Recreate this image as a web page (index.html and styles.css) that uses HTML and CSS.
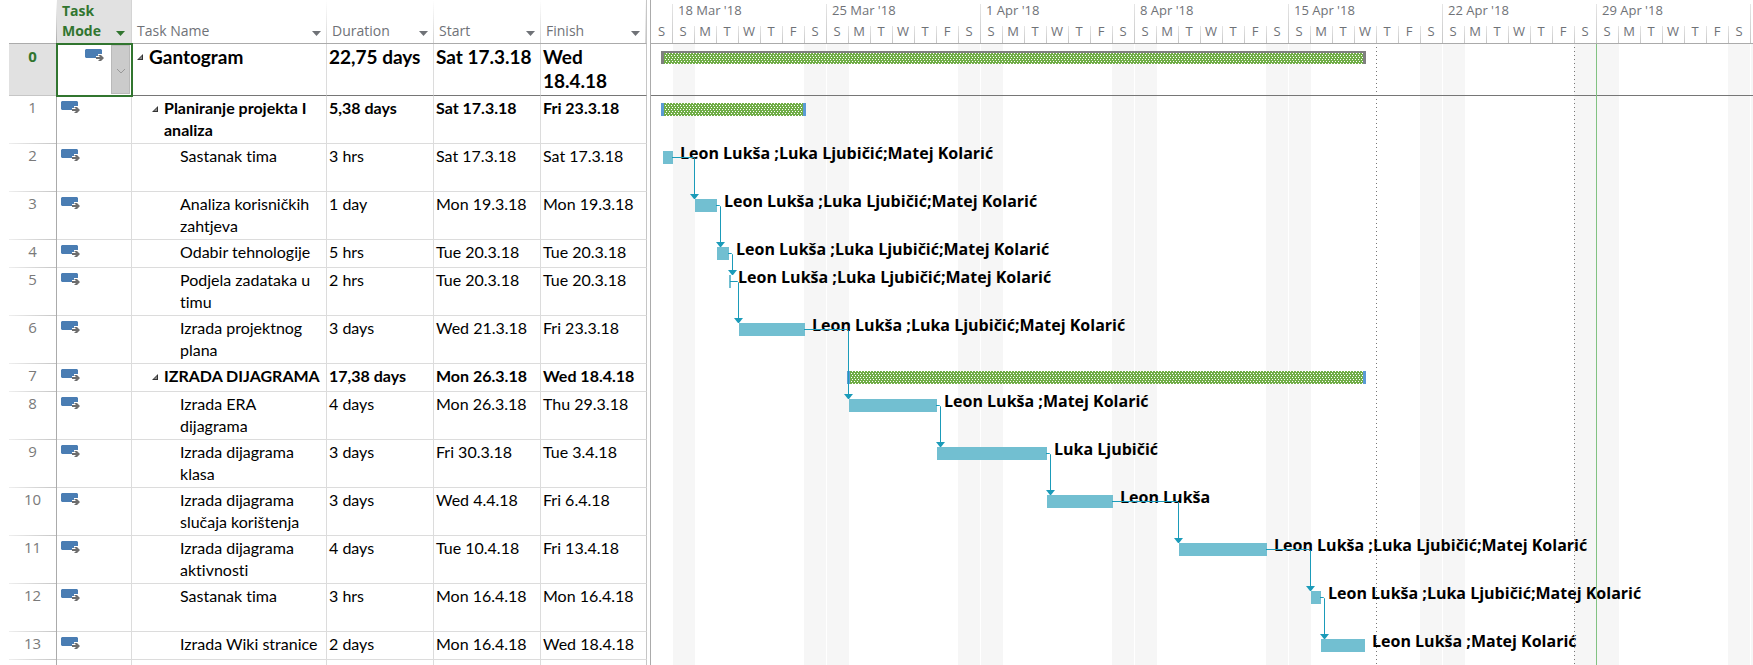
FILE: index.html
```html
<!DOCTYPE html>
<html lang="hr">
<head>
<meta charset="utf-8">
<meta name="viewport" content="width=device-width, initial-scale=1">
<title>Gantogram</title>
<link rel="stylesheet" href="styles.css">
</head>
<body>
<svg class="defs" aria-hidden="true">
  <symbol id="mode" viewBox="0 0 19 13">
    <path fill="#4a7db3" d="M1 0h15l1 1v4h-4v2h-2v2H1L0 8V1z"/>
    <path fill="#6d6d6d" d="M11 8h4l-2-2h3l3 3-3 3h-3l2-2h-4z"/>
  </symbol>
  <symbol id="fold" viewBox="0 0 6 6">
    <path fill="#333" d="M6 0v6H0z"/><path fill="#8a8a8a" d="M5 2v3H2z"/>
  </symbol>
</svg>
<main class="project">
  <table class="sheet">
    <colgroup><col class="c-id"><col class="c-mode"><col class="c-name"><col class="c-date"><col class="c-date"><col class="c-finish"></colgroup>
    <thead>
      <tr>
        <th class="id"></th>
        <th class="mode-head"><div class="head"><span>Task<br>Mode</span><button class="menu" aria-label="Task Mode menu"></button></div></th>
        <th><div class="head"><span>Task Name</span><button class="menu" aria-label="Task Name menu"></button></div></th>
        <th><div class="head"><span>Duration</span><button class="menu" aria-label="Duration menu"></button></div></th>
        <th><div class="head"><span>Start</span><button class="menu" aria-label="Start menu"></button></div></th>
        <th><div class="head"><span>Finish</span><button class="menu" aria-label="Finish menu"></button></div></th>
      </tr>
    </thead>
    <tbody>
      <tr class="root"><td class="id">0</td><td class="mode selected"><div class="picker"><svg class="icon"><use href="#mode"/></svg><button class="drop" aria-label="Choose task mode"><svg viewBox="0 0 10 6"><path d="M1 1l4 4 4-4"/></svg></button></div></td><td class="name"><div><svg class="fold"><use href="#fold"/></svg>Gantogram</div></td><td>22,75 days</td><td>Sat 17.3.18</td><td>Wed<br>18.4.18</td></tr>
      <tr class="tall phase"><td class="id">1</td><td class="mode"><svg class="icon"><use href="#mode"/></svg></td><td class="name"><div><svg class="fold"><use href="#fold"/></svg>Planiranje projekta I<br>analiza</div></td><td>5,38 days</td><td>Sat 17.3.18</td><td>Fri 23.3.18</td></tr>
      <tr class="tall"><td class="id">2</td><td class="mode"><svg class="icon"><use href="#mode"/></svg></td><td class="name">Sastanak tima</td><td>3 hrs</td><td>Sat 17.3.18</td><td>Sat 17.3.18</td></tr>
      <tr class="tall"><td class="id">3</td><td class="mode"><svg class="icon"><use href="#mode"/></svg></td><td class="name">Analiza korisničkih<br>zahtjeva</td><td>1 day</td><td>Mon 19.3.18</td><td>Mon 19.3.18</td></tr>
      <tr><td class="id">4</td><td class="mode"><svg class="icon"><use href="#mode"/></svg></td><td class="name">Odabir tehnologije</td><td>5 hrs</td><td>Tue 20.3.18</td><td>Tue 20.3.18</td></tr>
      <tr class="tall"><td class="id">5</td><td class="mode"><svg class="icon"><use href="#mode"/></svg></td><td class="name">Podjela zadataka u<br>timu</td><td>2 hrs</td><td>Tue 20.3.18</td><td>Tue 20.3.18</td></tr>
      <tr class="tall"><td class="id">6</td><td class="mode"><svg class="icon"><use href="#mode"/></svg></td><td class="name">Izrada projektnog<br>plana</td><td>3 days</td><td>Wed 21.3.18</td><td>Fri 23.3.18</td></tr>
      <tr class="phase"><td class="id">7</td><td class="mode"><svg class="icon"><use href="#mode"/></svg></td><td class="name"><div><svg class="fold"><use href="#fold"/></svg>IZRADA DIJAGRAMA</div></td><td>17,38 days</td><td>Mon 26.3.18</td><td>Wed 18.4.18</td></tr>
      <tr class="tall"><td class="id">8</td><td class="mode"><svg class="icon"><use href="#mode"/></svg></td><td class="name">Izrada ERA<br>dijagrama</td><td>4 days</td><td>Mon 26.3.18</td><td>Thu 29.3.18</td></tr>
      <tr class="tall"><td class="id">9</td><td class="mode"><svg class="icon"><use href="#mode"/></svg></td><td class="name">Izrada dijagrama<br>klasa</td><td>3 days</td><td>Fri 30.3.18</td><td>Tue 3.4.18</td></tr>
      <tr class="tall"><td class="id">10</td><td class="mode"><svg class="icon"><use href="#mode"/></svg></td><td class="name">Izrada dijagrama<br>slučaja korištenja</td><td>3 days</td><td>Wed 4.4.18</td><td>Fri 6.4.18</td></tr>
      <tr class="tall"><td class="id">11</td><td class="mode"><svg class="icon"><use href="#mode"/></svg></td><td class="name">Izrada dijagrama<br>aktivnosti</td><td>4 days</td><td>Tue 10.4.18</td><td>Fri 13.4.18</td></tr>
      <tr class="tall"><td class="id">12</td><td class="mode"><svg class="icon"><use href="#mode"/></svg></td><td class="name">Sastanak tima</td><td>3 hrs</td><td>Mon 16.4.18</td><td>Mon 16.4.18</td></tr>
      <tr><td class="id">13</td><td class="mode"><svg class="icon"><use href="#mode"/></svg></td><td class="name">Izrada Wiki stranice</td><td>2 days</td><td>Mon 16.4.18</td><td>Wed 18.4.18</td></tr>
      <tr class="blank"><td class="id"></td><td></td><td></td><td></td><td></td><td></td></tr>
    </tbody>
  </table>

  <section class="timeline" aria-label="Gantt chart">
    <header class="calendar">
      <div class="week lead"><div class="days"><span>S</span></div></div>
      <div class="week"><div class="date">18 Mar '18</div><div class="days"><span>S</span><span>M</span><span>T</span><span>W</span><span>T</span><span>F</span><span>S</span></div></div>
      <div class="week"><div class="date">25 Mar '18</div><div class="days"><span>S</span><span>M</span><span>T</span><span>W</span><span>T</span><span>F</span><span>S</span></div></div>
      <div class="week"><div class="date">1 Apr '18</div><div class="days"><span>S</span><span>M</span><span>T</span><span>W</span><span>T</span><span>F</span><span>S</span></div></div>
      <div class="week"><div class="date">8 Apr '18</div><div class="days"><span>S</span><span>M</span><span>T</span><span>W</span><span>T</span><span>F</span><span>S</span></div></div>
      <div class="week"><div class="date">15 Apr '18</div><div class="days"><span>S</span><span>M</span><span>T</span><span>W</span><span>T</span><span>F</span><span>S</span></div></div>
      <div class="week"><div class="date">22 Apr '18</div><div class="days"><span>S</span><span>M</span><span>T</span><span>W</span><span>T</span><span>F</span><span>S</span></div></div>
      <div class="week"><div class="date">29 Apr '18</div><div class="days"><span>S</span><span>M</span><span>T</span><span>W</span><span>T</span><span>F</span><span>S</span></div></div>
      <div class="week"></div>
    </header>
    <div class="chart">
      <div class="lane root"><div class="bar total" style="margin-left:10px;width:705px"></div></div>
      <div class="lane tall"><div class="bar summary" style="margin-left:10px;width:145px"></div></div>
      <div class="lane tall"><div class="bar" style="margin-left:12px;width:10px"></div><span class="who">Leon Lukša ;Luka Ljubičić;Matej Kolarić</span></div>
      <div class="lane tall"><div class="bar" style="margin-left:44px;width:22px"></div><span class="who">Leon Lukša ;Luka Ljubičić;Matej Kolarić</span></div>
      <div class="lane"><div class="bar" style="margin-left:66px;width:12px"></div><span class="who">Leon Lukša ;Luka Ljubičić;Matej Kolarić</span></div>
      <div class="lane tall"><div class="bar" style="margin-left:78px;width:2px"></div><span class="who">Leon Lukša ;Luka Ljubičić;Matej Kolarić</span></div>
      <div class="lane tall"><div class="bar" style="margin-left:88px;width:66px"></div><span class="who">Leon Lukša ;Luka Ljubičić;Matej Kolarić</span></div>
      <div class="lane"><div class="bar summary" style="margin-left:196px;width:519px"></div></div>
      <div class="lane tall"><div class="bar" style="margin-left:198px;width:88px"></div><span class="who">Leon Lukša ;Matej Kolarić</span></div>
      <div class="lane tall"><div class="bar" style="margin-left:286px;width:110px"></div><span class="who">Luka Ljubičić</span></div>
      <div class="lane tall"><div class="bar" style="margin-left:396px;width:66px"></div><span class="who">Leon Lukša</span></div>
      <div class="lane tall"><div class="bar" style="margin-left:528px;width:88px"></div><span class="who">Leon Lukša ;Luka Ljubičić;Matej Kolarić</span></div>
      <div class="lane tall"><div class="bar" style="margin-left:660px;width:10px"></div><span class="who">Leon Lukša ;Luka Ljubičić;Matej Kolarić</span></div>
      <div class="lane"><div class="bar" style="margin-left:670px;width:44px"></div><span class="who">Leon Lukša ;Matej Kolarić</span></div>
      <svg class="links" aria-hidden="true">
        <defs><marker id="tip" viewBox="0 0 9 5" markerWidth="9" markerHeight="5" refX="4.5" refY="0" markerUnits="userSpaceOnUse"><path d="M0 0h9L5 5H4z" fill="#1b9bb9"/></marker></defs>
        <g fill="none" stroke="#1b9bb9" marker-end="url(#tip)">
          <path d="M21 113.500H42.500L43.500 114.500V150"/>
          <path d="M65 161.500H68.500L69.500 162.500V198"/>
          <path d="M77 209.500H80.500L81.500 210.500V226"/>
          <path d="M79 237.500H86.500L87.500 238.500V274"/>
          <path d="M153 285.500H196.500L197.500 286.500V350"/>
          <path d="M285 361.500H288.500L289.500 362.500V398"/>
          <path d="M395 409.500H398.500L399.500 410.500V446"/>
          <path d="M461 457.500H526.500L527.500 458.500V494"/>
          <path d="M615 505.500H658.500L659.500 506.500V542"/>
          <path d="M669 553.500H672.500L673.500 554.500V590"/>
        </g>
      </svg>
      <div class="rule dotted" style="left:725px"></div>
      <div class="rule dotted" style="left:923px"></div>
      <div class="rule today" style="left:945px"></div>
    </div>
  </section>
</main>
</body>
</html>
```
FILE: styles.css
```css
* { box-sizing: border-box; }
body { margin: 0; background: #fff; color: #000; }
.defs { position: absolute; width: 0; height: 0; }
button { border: 0; padding: 0; background: none; }

.project {
  display: flex;
  height: 100vh;
  padding-left: 9px;
  overflow: hidden;
}

/* Task sheet */
.sheet {
  flex: none;
  width: 638px;
  table-layout: fixed;
  border-collapse: separate;
  border-spacing: 0;
  font: 16px/22px Lato, Carlito, sans-serif;
  font-variant-ligatures: none;
}
.c-id { width: 48px; }
.c-mode { width: 75px; }
.c-name { width: 195px; }
.c-date { width: 107px; }
.c-finish { width: 106px; }

.sheet th {
  height: 44px;
  padding: 0;
  vertical-align: bottom;
  text-align: left;
  font: 14px/20px "Open Sans", sans-serif;
  color: #6f7277;
  border-bottom: 1px solid #ababab;
  background: linear-gradient(#fff, #d4d4d4) right / 1px 100% no-repeat;
}
.sheet th.mode-head { background: #e1e1e1; color: #31752f; font-weight: 700; border-right: 1px solid #d4d4d4; }
.sheet th.id { background: linear-gradient(#fff, #ababab) right / 1px 100% no-repeat; }
.head {
  display: flex;
  justify-content: space-between;
  align-items: flex-end;
  padding: 0 6px 2px 5px;
}
.menu {
  width: 9px;
  height: 5px;
  margin-bottom: 5px;
  background: currentColor;
  color: inherit;
  clip-path: polygon(0 0, 100% 0, 50% 100%);
}

.sheet td {
  height: 28px;
  padding: 1px 0 0 2px;
  vertical-align: top;
  white-space: nowrap;
  border-right: 1px solid #dcdcdc;
  border-bottom: 1px solid #dcdcdc;
}
.sheet tr > :last-child { border-right: 1px solid #c6c6c6; }
.sheet .tall td { height: 48px; }
.sheet .root td { height: 52px; font-size: 19px; line-height: 24px; font-weight: 700; border-bottom-color: #767676; }
.sheet .phase td { font-weight: 700; }
.sheet .blank td { border-bottom: 0; }

.sheet td.id {
  padding: 1px 0 0;
  text-align: center;
  font: 15px/20px "Open Sans", sans-serif;
  color: #7a7a7a;
  border-right: 1px solid #ababab;
  border-bottom: 0;
  background: linear-gradient(90deg, #eee, #c6c6c6) bottom / 100% 1px no-repeat;
}
.sheet .phase td.id { font-weight: 400; }
.sheet .root td.id { background: #e1e1e1; color: #31752f; font-size: 15px; line-height: 22px; font-weight: 700; border-bottom: 1px solid #c6c6c6; }
.sheet .blank td.id { background: none; }

.sheet td.mode { padding: 5px 0 0 4px; line-height: 0; }
.icon { width: 19px; height: 13px; }
.sheet td.selected { padding: 0; outline: 2px solid #31752f; outline-offset: -1px; }
.picker { display: flex; justify-content: flex-end; gap: 7px; padding: 1px 1px 0 0; }
.picker .icon { margin-top: 4px; }
.drop { width: 19px; height: 49px; border: 1px solid #b9b9b9; background: #cbcbcb; }
.drop svg { width: 10px; height: 6px; fill: none; stroke: #989898; }

.sheet td.name { padding-left: 48px; }
.sheet .phase .name { padding-left: 20px; }
.sheet .root .name { padding-left: 5px; }
.name div { display: flex; gap: 6px; }
.fold { flex: none; width: 6px; height: 6px; margin-top: 9px; }

/* Timeline */
.timeline {
  flex: 1;
  min-width: 0;
  margin-left: 3px;
  border-left: 1px solid #ababab;
  display: flex;
  flex-direction: column;
  overflow: hidden;
}
.calendar {
  flex: none;
  display: flex;
  height: 44px;
  padding-top: 4px;
  border-bottom: 1px solid #ababab;
  font: 13px/12px "Open Sans", sans-serif;
  color: #6f7277;
}
.week {
  flex: none;
  width: 154px;
  display: flex;
  flex-direction: column;
  justify-content: space-between;
  background: linear-gradient(#e6e6e6, #c6c6c6) left / 1px 100% no-repeat;
}
.week.lead { width: 21px; justify-content: flex-end; background: none; }
.date { padding-left: 6px; }
.days { display: flex; height: 17px; line-height: 10px; }
.days span {
  width: 22px;
  text-align: center;
  background: linear-gradient(#e6e6e6, #c6c6c6) left / 1px 100% no-repeat;
}
.days span:first-child { background: none; }

.chart {
  position: relative;
  flex: 1;
  background:
    linear-gradient(#fff, #fff) 0 0 / 22px 100% no-repeat,
    repeating-linear-gradient(90deg, #f6f6f6 0 22px, #fff 22px 23px, #f6f6f6 23px 45px, #fff 45px 154px) -1px 0 / 1540px 100%;
}
.lane { display: flex; align-items: flex-start; height: 28px; padding-top: 7px; }
.lane.tall { height: 48px; }
.lane.root { height: 52px; border-bottom: 1px solid #767676; }
.bar { flex: none; height: 13px; background: #72bfd1; }
.summary, .total {
  border: solid #5b9bd5;
  border-width: 0 3px;
  background:
    conic-gradient(at 1px 1px, transparent 75%, #fff 0) 1px 2px / 3px 4px padding-box,
    conic-gradient(at 1px 1px, transparent 75%, #fff 0) 2px 4px / 3px 4px padding-box,
    #70ad47;
}
.total { border-color: #808080; border-width: 2px 3px 0; }
.who {
  margin: -8px 0 0 7px;
  font: 700 16px/20px "Open Sans", sans-serif;
  white-space: nowrap;
}
.links { position: absolute; inset: 0; width: 100%; height: 100%; }
.rule { position: absolute; top: 0; bottom: 0; width: 1px; }
.dotted { background: repeating-linear-gradient(transparent 0 3px, #777 3px 4px); }
.today { background: #82c282; }
```
